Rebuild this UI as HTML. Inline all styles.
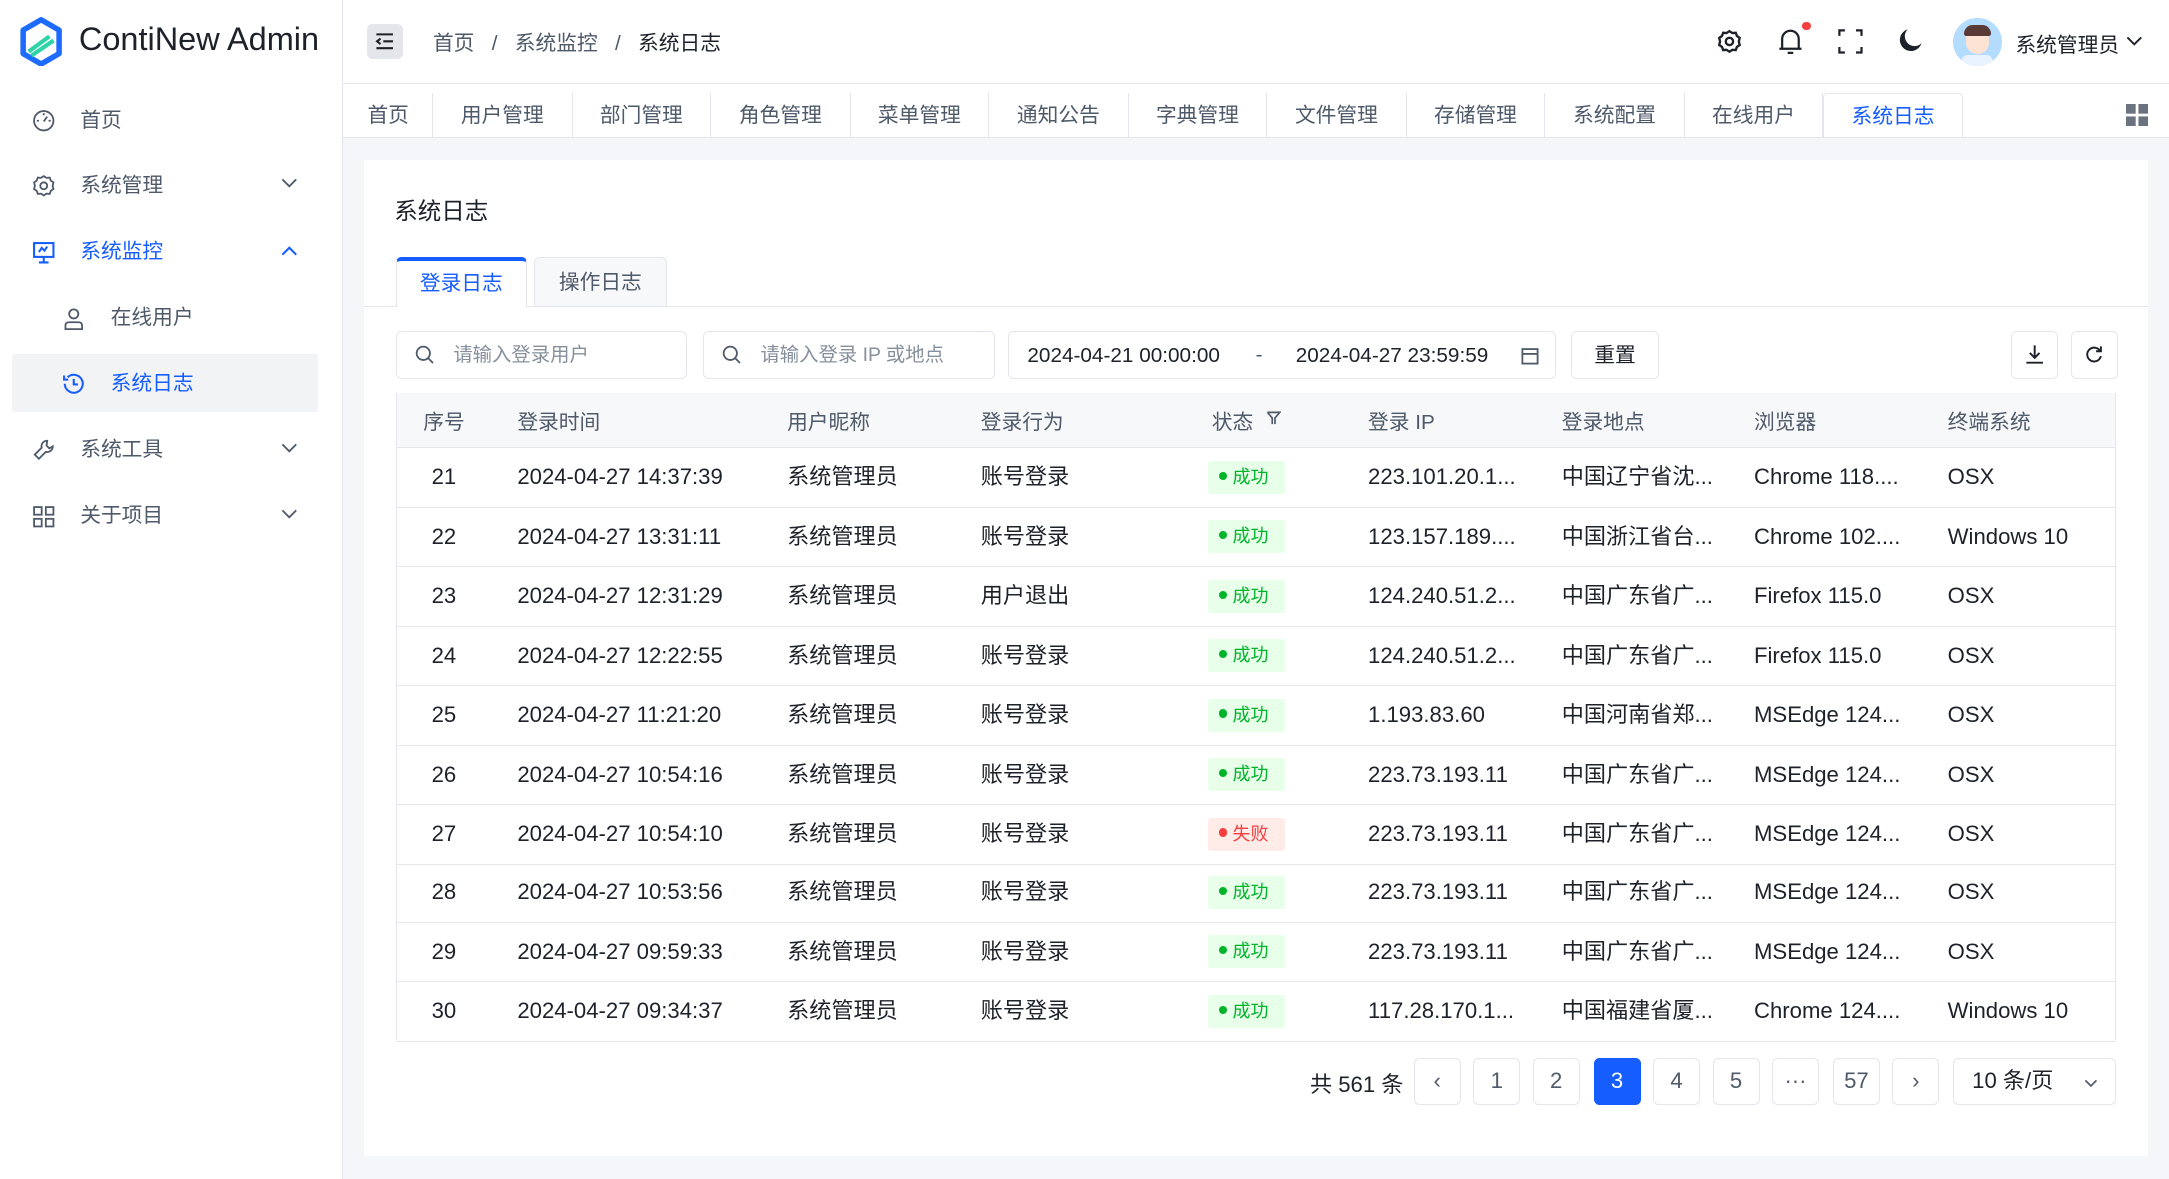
<!DOCTYPE html>
<html><head><meta charset="utf-8"><style>
html{zoom:1.38329}
*{box-sizing:border-box;margin:0;padding:0}
body{width:1568px;height:852px;overflow:hidden;background:#f5f6f9;font-family:"Liberation Sans","Noto Sans CJK SC",sans-serif;font-size:14px;color:#1d2129;position:relative}
.a{position:absolute}
.side{left:0;top:0;width:248px;height:852px;background:#fff;border-right:1px solid #e5e6eb}
.mi{position:absolute;left:0;width:240px;height:40px;line-height:40px;font-size:15px;color:#4e5969}
.mi svg{position:absolute;top:12px}
.hdr{left:248px;top:0;width:1320px;height:61px;background:#fff;border-bottom:1px solid #e5e6eb}
.tabs{left:248px;top:61px;width:1320px;height:39px;background:#fff;border-bottom:1px solid #e5e6eb}
.tb{position:absolute;top:6px;height:33px;line-height:33px;text-align:center;font-size:15px;color:#4e5969;border-right:1px solid #e5e6eb}
.card{left:263px;top:116px;width:1290px;height:720px;background:#fff}
.inp{position:absolute;top:239px;height:35px;border:1px solid #e5e6eb;border-radius:4px;background:#fff;line-height:33px;font-size:14px}
.btn{position:absolute;top:239px;height:35px;border:1px solid #e5e6eb;border-radius:4px;background:#fff;text-align:center;line-height:33px}
.th{left:286px;top:284px;width:1244px;height:40px;background:#f7f8fa;border-bottom:1px solid #e5e6eb}
.c{position:absolute;white-space:nowrap}
.row{position:absolute;left:286px;width:1244px;height:43px;border-bottom:1px solid #e5e6eb;font-size:16px;line-height:42px}
.tag{position:absolute;left:587px;top:9px;width:56px;height:24px;line-height:24px;border-radius:2px;font-size:13px;padding-left:8px}
.ok{background:#e8ffea;color:#00b42a}.fail{background:#ffece8;color:#f53f3f}
.tag i{display:inline-block;width:6px;height:6px;border-radius:3px;background:currentColor;margin-right:4px;vertical-align:2px}
.pg{position:absolute;top:765px;width:34px;height:34px;border:1px solid #e5e6eb;border-radius:4px;text-align:center;line-height:32px;font-size:16px;color:#4e5969}
</style></head><body>
<div class="a side">
  <svg class="a" style="left:14px;top:12px" width="32" height="36" viewBox="0 0 32 36"><path d="M16 2 L29 9.5 V26.5 L16 34 L3 26.5 V9.5 Z" fill="none" stroke="#1e6bff" stroke-width="4" stroke-linejoin="round"/><path d="M7 25 L22 14 M9 28 L25 17" stroke="#2ed3a8" stroke-width="3"/></svg>
  <div class="a" style="left:57px;top:15px;font-size:23.5px;color:#1d2129">ContiNew Admin</div>
  <div class="mi" style="top:67px"><svg style="left:23px" width="17" height="17" viewBox="0 0 17 17" fill="none" stroke="#4e5969" stroke-width="1.3"><circle cx="8.5" cy="8.5" r="7"/><path d="M8.5 9 L11 5.5 M8.5 3v1.5M3.5 8.5H5M12 8.5h1.5"/></svg><span style="position:absolute;left:58px">首页</span></div>
  <div class="mi" style="top:114px"><svg style="left:23px" width="17" height="17" viewBox="0 0 17 17" fill="none" stroke="#4e5969" stroke-width="1.3"><path d="M8.5 1.5l2 1.3 2.3-.2.8 2.2 1.9 1.3-.6 2.4.6 2.4-1.9 1.3-.8 2.2-2.3-.2-2 1.3-2-1.3-2.3.2-.8-2.2-1.9-1.3.6-2.4-.6-2.4 1.9-1.3.8-2.2 2.3.2z"/><circle cx="8.5" cy="8.5" r="2.5"/></svg><span style="position:absolute;left:58px">系统管理</span><svg style="left:203px;top:15px" width="12" height="8" viewBox="0 0 12 8"><path d="M1 1l5 5 5-5" fill="none" stroke="#4e5969" stroke-width="1.3"/></svg></div>
  <div class="mi" style="top:162px;color:#165dff"><svg style="left:23px" width="17" height="17" viewBox="0 0 17 17" fill="none" stroke="#165dff" stroke-width="1.5"><rect x="1.5" y="1.5" width="14" height="10"/><path d="M8.5 11.5v4M5 15.5h7M5 8l2-3 2 2 2-3"/></svg><span style="position:absolute;left:58px">系统监控</span><svg style="left:203px;top:15px" width="12" height="8" viewBox="0 0 12 8"><path d="M1 7l5-5 5 5" fill="none" stroke="#165dff" stroke-width="1.5"/></svg></div>
  <div class="mi" style="top:210px"><svg style="left:45px" width="17" height="17" viewBox="0 0 17 17" fill="none" stroke="#4e5969" stroke-width="1.3"><circle cx="8.5" cy="5" r="3.3"/><path d="M2.5 16v-2.5q0-2.5 2.5-2.5h7q2.5 0 2.5 2.5V16z"/></svg><span style="position:absolute;left:80px">在线用户</span></div>
  <div class="a" style="left:9px;top:256px;width:221px;height:42px;background:#f2f3f5;border-radius:2px"></div>
  <div class="mi" style="top:257px;color:#165dff"><svg style="left:45px" width="17" height="17" viewBox="0 0 17 17" fill="none" stroke="#165dff" stroke-width="1.5"><path d="M2 8.5A6.5 6.5 0 1 0 4 3.8"/><path d="M1.5 2.5v3h3M8.5 5v4h3"/></svg><span style="position:absolute;left:80px">系统日志</span></div>
  <div class="mi" style="top:305px"><svg style="left:23px" width="17" height="17" viewBox="0 0 17 17" fill="none" stroke="#4e5969" stroke-width="1.3"><path d="M11 2a4 4 0 0 0-4 5L2 12l3 3 5-5a4 4 0 0 0 5-4l-2.5 1.5-2-2z"/></svg><span style="position:absolute;left:58px">系统工具</span><svg style="left:203px;top:15px" width="12" height="8" viewBox="0 0 12 8"><path d="M1 1l5 5 5-5" fill="none" stroke="#4e5969" stroke-width="1.3"/></svg></div>
  <div class="mi" style="top:353px"><svg style="left:23px" width="17" height="17" viewBox="0 0 17 17" fill="none" stroke="#4e5969" stroke-width="1.3"><rect x="1.5" y="1.5" width="5.5" height="5.5"/><rect x="10" y="1.5" width="5.5" height="5.5"/><rect x="1.5" y="10" width="5.5" height="5.5"/><rect x="10" y="10" width="5.5" height="5.5"/></svg><span style="position:absolute;left:58px">关于项目</span><svg style="left:203px;top:15px" width="12" height="8" viewBox="0 0 12 8"><path d="M1 1l5 5 5-5" fill="none" stroke="#4e5969" stroke-width="1.3"/></svg></div>
</div>
<div class="a hdr">
  <div class="a" style="left:17px;top:17px;width:26px;height:26px;background:#e5e6eb;border-radius:4px"><svg style="position:absolute;left:6px;top:7px" width="14" height="12" viewBox="0 0 14 12" stroke="#1d2129" stroke-width="1.5" fill="none"><path d="M1 1h12M6 6h7M1 11h12M4 4L1.5 6 4 8"/></svg></div>
  <div class="a" style="left:65px;top:19px;font-size:15px;color:#4e5969">首页 &nbsp;&nbsp;/&nbsp;&nbsp; 系统监控 &nbsp;&nbsp;/&nbsp;&nbsp; <span style="color:#1d2129">系统日志</span></div>
  <svg class="a" style="left:993px;top:21px" width="18" height="18" viewBox="0 0 17 17" fill="none" stroke="#1d2129" stroke-width="1.6"><path d="M8.5 1.5l2 1.3 2.3-.2.8 2.2 1.9 1.3-.6 2.4.6 2.4-1.9 1.3-.8 2.2-2.3-.2-2 1.3-2-1.3-2.3.2-.8-2.2-1.9-1.3.6-2.4-.6-2.4 1.9-1.3.8-2.2 2.3.2z"/><circle cx="8.5" cy="8.5" r="2.5"/></svg>
  <svg class="a" style="left:1037px;top:20px" width="18" height="20" viewBox="0 0 18 20" fill="none" stroke="#1d2129" stroke-width="1.6"><path d="M3 15V8a6 6 0 0 1 12 0v7zM1 15h16M7 18h4"/></svg>
  <div class="a" style="left:1055px;top:16px;width:6px;height:6px;border-radius:3px;background:#f53f3f"></div>
  <svg class="a" style="left:1081px;top:21px" width="18" height="18" viewBox="0 0 18 18" fill="none" stroke="#1d2129" stroke-width="1.6"><path d="M1 5V1h4M13 1h4v4M17 13v4h-4M5 17H1v-4"/></svg>
  <svg class="a" style="left:1124px;top:20px" width="18" height="18" viewBox="0 0 18 18"><path d="M7 1a8 8 0 1 0 10 10A7 7 0 0 1 7 1z" fill="#1d2129"/></svg>
  <div class="a" style="left:1164px;top:13px;width:35px;height:35px;border-radius:50%;background:#b3dcff;overflow:hidden"><div style="position:absolute;left:9px;top:7px;width:17px;height:19px;border-radius:8px;background:#fde3d4"></div><div style="position:absolute;left:8px;top:5px;width:19px;height:8px;border-radius:8px 8px 2px 2px;background:#5a3a36"></div><div style="position:absolute;left:6px;top:27px;width:23px;height:10px;border-radius:6px;background:#e8f3ff"></div></div>
  <div class="a" style="left:1209px;top:20px;font-size:15px">系统管理员</div>
  <svg class="a" style="left:1289px;top:26px" width="12" height="8" viewBox="0 0 12 8"><path d="M1 1l5 5 5-5" fill="none" stroke="#1d2129" stroke-width="1.4"/></svg>
</div>
<div class="a tabs">
  <div class="tb" style="left:1px;width:64px">首页</div>
  <div class="tb" style="left:65px;width:101px">用户管理</div>
  <div class="tb" style="left:166px;width:100px">部门管理</div>
  <div class="tb" style="left:266px;width:101px">角色管理</div>
  <div class="tb" style="left:367px;width:100px">菜单管理</div>
  <div class="tb" style="left:467px;width:101px">通知公告</div>
  <div class="tb" style="left:568px;width:100px">字典管理</div>
  <div class="tb" style="left:668px;width:101px">文件管理</div>
  <div class="tb" style="left:769px;width:100px">存储管理</div>
  <div class="tb" style="left:869px;width:101px">系统配置</div>
  <div class="tb" style="left:970px;width:100px">在线用户</div>
  <div class="tb" style="left:1070px;width:101px;color:#165dff;border-top:1px solid #e5e6eb;border-left:1px solid #e5e6eb;border-radius:3px 3px 0 0">系统日志</div>
  <svg class="a" style="left:1289px;top:14px" width="16" height="16" viewBox="0 0 16 16" fill="#6b7280"><rect width="7" height="7"/><rect x="9" width="7" height="7"/><rect y="9" width="7" height="7"/><rect x="9" y="9" width="7" height="7"/></svg>
</div>
<div class="a card"></div>
<div class="a" style="left:285px;top:139px;font-size:17px;color:#1d2129">系统日志</div>
<div class="a" style="left:263px;top:221px;width:1290px;height:1px;background:#e5e6eb"></div>
<div class="a" style="left:286px;top:186px;width:95px;height:36px;background:#fff;border:1px solid #e5e6eb;border-top:3px solid #165dff;border-bottom:none;border-radius:4px 4px 0 0;text-align:center;line-height:33px;font-size:15px;color:#165dff">登录日志</div>
<div class="a" style="left:386px;top:186px;width:96px;height:35px;background:#f7f8fa;border:1px solid #e5e6eb;border-bottom:none;border-radius:4px 4px 0 0;text-align:center;line-height:36px;font-size:15px;color:#4e5969">操作日志</div>
<div class="inp" style="left:286px;width:211px"><svg style="position:absolute;left:13px;top:10px" width="14" height="14" viewBox="0 0 14 14" fill="none" stroke="#4e5969" stroke-width="1.3"><circle cx="6" cy="6" r="4.8"/><path d="M9.5 9.5L13 13"/></svg><span style="position:absolute;left:41px;top:1px;color:#86909c">请输入登录用户</span></div>
<div class="inp" style="left:508px;width:211px"><svg style="position:absolute;left:13px;top:10px" width="14" height="14" viewBox="0 0 14 14" fill="none" stroke="#4e5969" stroke-width="1.3"><circle cx="6" cy="6" r="4.8"/><path d="M9.5 9.5L13 13"/></svg><span style="position:absolute;left:41px;top:1px;color:#86909c">请输入登录 IP 或地点</span></div>
<div class="inp" style="left:729px;width:396px;font-size:15px"><span style="position:absolute;left:13px;top:1px">2024-04-21 00:00:00</span><span style="position:absolute;left:178px;color:#4e5969">-</span><span style="position:absolute;left:207px;top:1px">2024-04-27 23:59:59</span><svg style="position:absolute;left:370px;top:11px" width="13" height="13" viewBox="0 0 13 13" fill="none" stroke="#4e5969" stroke-width="1.3"><rect x="1" y="1.5" width="11" height="10.5"/><path d="M1 5h11"/></svg></div>
<div class="btn" style="left:1136px;width:63px;font-size:15px;line-height:35px">重置</div>
<div class="btn" style="left:1454px;width:34px"><svg style="margin-top:9px" width="14" height="15" viewBox="0 0 14 15" fill="none" stroke="#1d2129" stroke-width="1.4"><path d="M7 1v9M3.5 6.5L7 10l3.5-3.5M1 13.5h12"/></svg></div>
<div class="btn" style="left:1497px;width:34px"><svg style="margin-top:10px" width="13" height="13" viewBox="0 0 13 13" fill="none" stroke="#1d2129" stroke-width="1.4"><path d="M11 4.5A5 5 0 1 0 11.5 8M11.5 1v3.5H8"/></svg></div>
<div class="a th">
  <span class="c" style="left:20px;top:9px;color:#4e5969;font-size:15px">序号</span>
  <span class="c" style="left:88px;top:9px;color:#4e5969;font-size:15px">登录时间</span>
  <span class="c" style="left:283px;top:9px;color:#4e5969;font-size:15px">用户昵称</span>
  <span class="c" style="left:423px;top:9px;color:#4e5969;font-size:15px">登录行为</span>
  <span class="c" style="left:590px;top:9px;color:#4e5969;font-size:15px">状态</span>
  <svg class="c" style="left:629px;top:13px" width="11" height="11" viewBox="0 0 11 11" fill="none" stroke="#4e5969" stroke-width="1.2"><path d="M1 1h9L6.5 5v4.5M4.5 9.5V5L1 1"/></svg>
  <span class="c" style="left:703px;top:9px;color:#4e5969;font-size:15px">登录 IP</span>
  <span class="c" style="left:843px;top:9px;color:#4e5969;font-size:15px">登录地点</span>
  <span class="c" style="left:982px;top:9px;color:#4e5969;font-size:15px">浏览器</span>
  <span class="c" style="left:1122px;top:9px;color:#4e5969;font-size:15px">终端系统</span>
</div>
<div class="row" style="top:324px"><span class="c" style="left:26px">21</span><span class="c" style="left:88px">2024-04-27 14:37:39</span><span class="c" style="left:283px">系统管理员</span><span class="c" style="left:423px">账号登录</span><div class="tag ok"><i></i>成功</div><span class="c" style="left:703px">223.101.20.1...</span><span class="c" style="left:843px">中国辽宁省沈...</span><span class="c" style="left:982px">Chrome 118....</span><span class="c" style="left:1122px">OSX</span></div>
<div class="row" style="top:367px"><span class="c" style="left:26px">22</span><span class="c" style="left:88px">2024-04-27 13:31:11</span><span class="c" style="left:283px">系统管理员</span><span class="c" style="left:423px">账号登录</span><div class="tag ok"><i></i>成功</div><span class="c" style="left:703px">123.157.189....</span><span class="c" style="left:843px">中国浙江省台...</span><span class="c" style="left:982px">Chrome 102....</span><span class="c" style="left:1122px">Windows 10</span></div>
<div class="row" style="top:410px"><span class="c" style="left:26px">23</span><span class="c" style="left:88px">2024-04-27 12:31:29</span><span class="c" style="left:283px">系统管理员</span><span class="c" style="left:423px">用户退出</span><div class="tag ok"><i></i>成功</div><span class="c" style="left:703px">124.240.51.2...</span><span class="c" style="left:843px">中国广东省广...</span><span class="c" style="left:982px">Firefox 115.0</span><span class="c" style="left:1122px">OSX</span></div>
<div class="row" style="top:453px"><span class="c" style="left:26px">24</span><span class="c" style="left:88px">2024-04-27 12:22:55</span><span class="c" style="left:283px">系统管理员</span><span class="c" style="left:423px">账号登录</span><div class="tag ok"><i></i>成功</div><span class="c" style="left:703px">124.240.51.2...</span><span class="c" style="left:843px">中国广东省广...</span><span class="c" style="left:982px">Firefox 115.0</span><span class="c" style="left:1122px">OSX</span></div>
<div class="row" style="top:496px"><span class="c" style="left:26px">25</span><span class="c" style="left:88px">2024-04-27 11:21:20</span><span class="c" style="left:283px">系统管理员</span><span class="c" style="left:423px">账号登录</span><div class="tag ok"><i></i>成功</div><span class="c" style="left:703px">1.193.83.60</span><span class="c" style="left:843px">中国河南省郑...</span><span class="c" style="left:982px">MSEdge 124...</span><span class="c" style="left:1122px">OSX</span></div>
<div class="row" style="top:539px"><span class="c" style="left:26px">26</span><span class="c" style="left:88px">2024-04-27 10:54:16</span><span class="c" style="left:283px">系统管理员</span><span class="c" style="left:423px">账号登录</span><div class="tag ok"><i></i>成功</div><span class="c" style="left:703px">223.73.193.11</span><span class="c" style="left:843px">中国广东省广...</span><span class="c" style="left:982px">MSEdge 124...</span><span class="c" style="left:1122px">OSX</span></div>
<div class="row" style="top:582px"><span class="c" style="left:26px">27</span><span class="c" style="left:88px">2024-04-27 10:54:10</span><span class="c" style="left:283px">系统管理员</span><span class="c" style="left:423px">账号登录</span><div class="tag fail"><i></i>失败</div><span class="c" style="left:703px">223.73.193.11</span><span class="c" style="left:843px">中国广东省广...</span><span class="c" style="left:982px">MSEdge 124...</span><span class="c" style="left:1122px">OSX</span></div>
<div class="row" style="top:624px"><span class="c" style="left:26px">28</span><span class="c" style="left:88px">2024-04-27 10:53:56</span><span class="c" style="left:283px">系统管理员</span><span class="c" style="left:423px">账号登录</span><div class="tag ok"><i></i>成功</div><span class="c" style="left:703px">223.73.193.11</span><span class="c" style="left:843px">中国广东省广...</span><span class="c" style="left:982px">MSEdge 124...</span><span class="c" style="left:1122px">OSX</span></div>
<div class="row" style="top:667px"><span class="c" style="left:26px">29</span><span class="c" style="left:88px">2024-04-27 09:59:33</span><span class="c" style="left:283px">系统管理员</span><span class="c" style="left:423px">账号登录</span><div class="tag ok"><i></i>成功</div><span class="c" style="left:703px">223.73.193.11</span><span class="c" style="left:843px">中国广东省广...</span><span class="c" style="left:982px">MSEdge 124...</span><span class="c" style="left:1122px">OSX</span></div>
<div class="row" style="top:710px"><span class="c" style="left:26px">30</span><span class="c" style="left:88px">2024-04-27 09:34:37</span><span class="c" style="left:283px">系统管理员</span><span class="c" style="left:423px">账号登录</span><div class="tag ok"><i></i>成功</div><span class="c" style="left:703px">117.28.170.1...</span><span class="c" style="left:843px">中国福建省厦...</span><span class="c" style="left:982px">Chrome 124....</span><span class="c" style="left:1122px">Windows 10</span></div>
<div class="a" style="left:286px;top:284px;width:1px;height:468px;background:#e5e6eb"></div>
<div class="a" style="left:1529px;top:284px;width:1px;height:468px;background:#e5e6eb"></div>
<div class="a" style="left:947px;top:771px;font-size:16px">共 561 条</div>
<div class="pg" style="left:1022px">‹</div>
<div class="pg" style="left:1065px">1</div>
<div class="pg" style="left:1108px">2</div>
<div class="pg" style="left:1152px;background:#165dff;border-color:#165dff;color:#fff">3</div>
<div class="pg" style="left:1195px">4</div>
<div class="pg" style="left:1238px">5</div>
<div class="pg" style="left:1281px">···</div>
<div class="pg" style="left:1325px">57</div>
<div class="pg" style="left:1368px">›</div>
<div class="pg" style="left:1412px;width:118px;text-align:left;padding-left:13px;color:#1d2129">10 条/页<svg style="position:absolute;left:94px;top:14px" width="10" height="6" viewBox="0 0 10 6"><path d="M1 1l4 4 4-4" fill="none" stroke="#4e5969" stroke-width="1.2"/></svg></div>
</body></html>
